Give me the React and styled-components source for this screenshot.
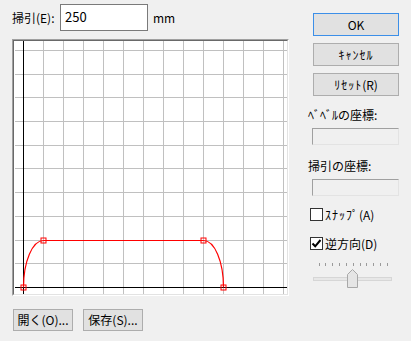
import React from 'react';
import styled, { createGlobalStyle } from 'styled-components';

const Global = createGlobalStyle`
  html, body { margin: 0; padding: 0; background: #f0f0f0; }
  body { font-family: "Noto Sans CJK JP", sans-serif; }
`;

const Dialog = styled.div`
  width: 411px;
  height: 341px;
  box-sizing: border-box;
  background: #f0f0f0;
  display: grid;
  grid-template-columns: 277px 92px;
  column-gap: 19px;
  align-items: start;
  padding-left: 12px;
  font-family: "Noto Sans CJK JP", sans-serif;
  font-size: 12px;
  color: #000;
`;

const LeftPane = styled.div`
  display: flex;
  flex-direction: column;
  padding-top: 4px;
`;

const TopRow = styled.div`
  display: flex;
  align-items: center;
  height: 27px;
`;

const FieldLabel = styled.span`
  width: 46px;
  margin-right: 2px;
  white-space: nowrap;
  line-height: 16px;
`;

const TextInput = styled.input`
  box-sizing: border-box;
  width: 88px;
  height: 27px;
  margin: 0;
  border: 1px solid #7a7a7a;
  background: #fff;
  padding: 0 0 2px 4px;
  font-family: "Noto Sans CJK JP", sans-serif;
  font-size: 13px;
  color: #000;
  outline: none;
`;

const Unit = styled.span`
  margin-left: 5px;
  line-height: 16px;
`;

const CanvasFrame = styled.div`
  margin-top: 8px;
  width: 277px;
  height: 257px;
  box-sizing: border-box;
  border: 1px solid;
  border-color: #a0a0a0 #ffffff #ffffff #a0a0a0;
`;

const CanvasInner = styled.div`
  height: 100%;
  box-sizing: border-box;
  border: 1px solid;
  border-color: #696969 #e3e3e3 #e3e3e3 #696969;
  background: #fff;
  svg { display: block; }
`;

const BottomRow = styled.div`
  display: flex;
  gap: 10px;
  margin-top: 13px;
  padding-left: 1px;
`;

const PushButton = styled.button`
  box-sizing: border-box;
  width: ${(p) => p.$w || 86}px;
  height: ${(p) => p.$h || 23}px;
  margin: ${(p) => p.$mt || 0}px 0 0 ${(p) => p.$ml || 0}px;
  padding: 0;
  display: flex;
  align-items: center;
  justify-content: center;
  background: #e1e1e1;
  border: 1px solid ${(p) => (p.$default ? '#3c8fe8' : '#adadad')};
  font-family: "Noto Sans CJK JP", sans-serif;
  font-size: 12px;
  line-height: 16px;
  color: #000;
  white-space: nowrap;
`;

const Kana = styled.span`
  letter-spacing: 1px;
`;

const RightPane = styled.div`
  display: flex;
  flex-direction: column;
  align-items: flex-start;
  padding-top: 13px;
`;

const CoordLabel = styled.div`
  margin-top: ${(p) => p.$mt}px;
  line-height: 16px;
  white-space: nowrap;
`;

const CoordBox = styled.div`
  box-sizing: border-box;
  margin: 5px 0 0 4px;
  width: 87px;
  height: 17px;
  border: 1px solid;
  border-color: #a0a0a0 #e3e3e3 #e3e3e3 #a0a0a0;
  background: #f0f0f0;
`;

const CheckRow = styled.label`
  display: flex;
  align-items: center;
  height: 13px;
  margin: ${(p) => p.$mt}px 0 0 2px;
  white-space: nowrap;
`;

const CheckBox = styled.span`
  box-sizing: border-box;
  width: 13px;
  height: 13px;
  border: 1px solid #333;
  background: #fff;
  display: flex;
  align-items: center;
  justify-content: center;
  svg { display: block; }
`;

const CheckText = styled.span`
  margin-left: 2px;
  line-height: 16px;
`;

const SliderWrap = styled.div`
  margin: 13px 0 0 5px;
  svg { display: block; }
`;

const hLines = [9, 33, 56, 80, 104, 127, 151, 175, 199, 222];
const vLines = Array.from({ length: 13 }, (_, i) => 29 + i * 20);
const markers = [
  [9, 246],
  [29, 199],
  [189, 199],
  [209, 246],
];

function SweepGraph() {
  return (
    <svg width="273" height="253" viewBox="0 0 273 253">
      {hLines.map((y) => (
        <line key={'h' + y} x1="1" y1={y + 0.5} x2="273" y2={y + 0.5} stroke="#c0c0c0" strokeWidth="1" />
      ))}
      {vLines.map((x) => (
        <line key={'v' + x} x1={x + 0.5} y1="0" x2={x + 0.5} y2="253" stroke="#c0c0c0" strokeWidth="1" />
      ))}
      <line x1="1" y1="246.5" x2="273" y2="246.5" stroke="#000" strokeWidth="1" />
      <line x1="9.5" y1="0" x2="9.5" y2="253" stroke="#000" strokeWidth="1" />
      <path
        d="M9.5,246.5 A20,47 0 0 1 29.5,199.5 L189.5,199.5 A20,47 0 0 1 209.5,246.5"
        fill="none"
        stroke="#ff0000"
        strokeWidth="1.2"
      />
      {markers.map(([x, y]) => (
        <rect key={x + '-' + y} x={x - 2} y={y - 2} width="5" height="5" fill="none" stroke="#ff0000" strokeWidth="1" />
      ))}
    </svg>
  );
}

function Slider() {
  const ticks = Array.from({ length: 11 }, (_, i) => 5.5 + i * 6.84);
  return (
    <svg width="80" height="26" viewBox="0 0 80 26">
      {ticks.map((x) => (
        <line key={x} x1={Math.round(x) + 0.5} y1="0" x2={Math.round(x) + 0.5} y2="3" stroke="#9a9a9a" strokeWidth="1" />
      ))}
      <rect x="0.5" y="14.5" width="78" height="3" fill="#e7e7e7" stroke="#d6d6d6" strokeWidth="1" />
      <path d="M34.5,11.5 L39.5,6.5 L44.5,11.5 L44.5,24.5 L34.5,24.5 Z" fill="#e5e5e5" stroke="#a8a8a8" strokeWidth="1" />
    </svg>
  );
}

export default function App() {
  return (
    <>
      <Global />
      <Dialog>
        <LeftPane>
          <TopRow>
            <FieldLabel>掃引(E):</FieldLabel>
            <TextInput defaultValue="250" />
            <Unit>mm</Unit>
          </TopRow>
          <CanvasFrame>
            <CanvasInner>
              <SweepGraph />
            </CanvasInner>
          </CanvasFrame>
          <BottomRow>
            <PushButton $w={60} $h={22}>開く(O)...</PushButton>
            <PushButton $w={60} $h={22}>保存(S)...</PushButton>
          </BottomRow>
        </LeftPane>
        <RightPane>
          <PushButton $default $ml={5}>OK</PushButton>
          <PushButton $ml={5} $mt={7}><Kana>ｷｬﾝｾﾙ</Kana></PushButton>
          <PushButton $ml={5} $mt={7}><Kana>ﾘｾｯﾄ</Kana>(R)</PushButton>
          <CoordLabel $mt={11}>ﾍﾞﾍﾞﾙの座標:</CoordLabel>
          <CoordBox />
          <CoordLabel $mt={13}>掃引の座標:</CoordLabel>
          <CoordBox />
          <CheckRow $mt={12}>
            <CheckBox />
            <CheckText><Kana>ｽﾅｯﾌﾟ</Kana>(A)</CheckText>
          </CheckRow>
          <CheckRow $mt={16}>
            <CheckBox>
              <svg width="11" height="11" viewBox="0 0 11 11">
                <path d="M1.5,5.5 L4.2,8.3 L9.5,2" fill="none" stroke="#000" strokeWidth="2" />
              </svg>
            </CheckBox>
            <CheckText>逆方向(D)</CheckText>
          </CheckRow>
          <SliderWrap>
            <Slider />
          </SliderWrap>
        </RightPane>
      </Dialog>
    </>
  );
}
